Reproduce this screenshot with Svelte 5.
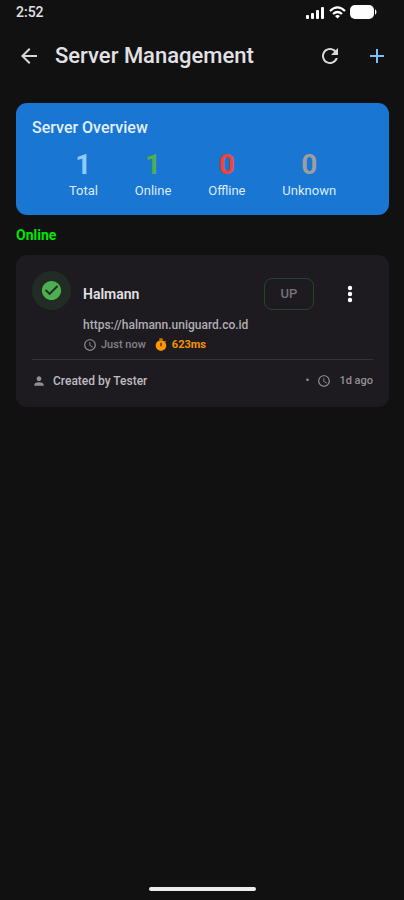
<script>
	const stats = [
		{ label: 'Total', value: 1, tone: 'total' },
		{ label: 'Online', value: 1, tone: 'online' },
		{ label: 'Offline', value: 0, tone: 'offline' },
		{ label: 'Unknown', value: 0, tone: 'unknown' }
	];

	const servers = [
		{
			name: 'Halmann',
			url: 'https://halmann.uniguard.co.id',
			status: 'UP',
			checked: 'Just now',
			latency: '623ms',
			author: 'Tester',
			age: '1d ago'
		}
	];
</script>

{#snippet clock()}
	<svg class="icon-clock" viewBox="0 0 24 24" aria-hidden="true">
		<path d="M11.99 2C6.47 2 2 6.48 2 12s4.47 10 9.99 10C17.52 22 22 17.52 22 12S17.52 2 11.99 2zM12 20c-4.42 0-8-3.58-8-8s3.58-8 8-8 8 3.58 8 8-3.58 8-8 8zm.5-13H11v6l5.25 3.15.75-1.23-4.5-2.67z" />
	</svg>
{/snippet}

<div class="screen">
	<div class="status-bar">
		<span class="time">2:52</span>
		<div class="indicators">
			<svg width="19" height="13" viewBox="0 0 19 13" aria-hidden="true">
				<rect x="0" y="9" width="3" height="4" rx="1" />
				<rect x="5" y="7" width="3" height="6" rx="1" />
				<rect x="10" y="4" width="3" height="9" rx="1" />
				<rect x="15" y="1" width="3" height="12" rx="1" />
			</svg>
			<svg width="17" height="13" viewBox="0 0 17 13" aria-hidden="true">
				<g fill="none" stroke="#fff" stroke-width="2.2">
					<path d="M1 5Q8.5-2.2 16 5" />
					<path d="M4 8Q8.5 4 13 8" />
				</g>
				<path d="M8.5 12.500L6 10Q8.5 8 11 10Z" />
			</svg>
			<svg width="28" height="14" viewBox="0 0 28 14" aria-hidden="true">
				<rect width="24" height="14" rx="5" />
				<path d="M25 4Q28 7 25 10Z" />
			</svg>
		</div>
	</div>

	<header class="app-bar">
		<button class="icon-button" aria-label="Back">
			<svg viewBox="0 0 24 24"><path d="M20 11H7.83l5.59-5.59L12 4l-8 8 8 8 1.41-1.41L7.83 13H20z" /></svg>
		</button>
		<h1>Server Management</h1>
		<button class="icon-button" aria-label="Refresh">
			<svg viewBox="0 0 24 24"><path d="M17.65 6.35C16.2 4.9 14.21 4 12 4c-4.42 0-7.99 3.58-7.99 8s3.57 8 7.99 8c3.73 0 6.84-2.55 7.73-6h-2.08c-.82 2.33-3.04 4-5.65 4-3.31 0-6-2.69-6-6s2.69-6 6-6c1.66 0 3.14.69 4.22 1.78L13 11h7V4z" /></svg>
		</button>
		<button class="icon-button add" aria-label="Add server">
			<svg viewBox="0 0 24 24"><path d="M19 13h-6v6h-2v-6H5v-2h6V5h2v6h6z" /></svg>
		</button>
	</header>

	<main>
		<section class="overview">
			<h2>Server Overview</h2>
			<div class="stats">
				{#each stats as stat}
					<div class="stat">
						<span class="value {stat.tone}">{stat.value}</span>
						<span class="label">{stat.label}</span>
					</div>
				{/each}
			</div>
		</section>

		<h3 class="group-title">Online</h3>

		{#each servers as server}
			<article class="server">
				<div class="server-main">
					<div class="avatar">
						<svg viewBox="0 0 24 24" aria-hidden="true"><path d="M12 2C6.48 2 2 6.48 2 12s4.48 10 10 10 10-4.48 10-10S17.52 2 12 2zm-2 15l-5-5 1.41-1.41L10 14.17l7.59-7.59L19 8z" /></svg>
					</div>
					<div class="details">
						<div class="name-row">
							<h4>{server.name}</h4>
							<span class="badge">{server.status}</span>
							<button class="icon-button more" aria-label="More options">
								<svg viewBox="0 0 24 24"><circle cx="12" cy="5.5" r="2.4" /><circle cx="12" cy="12" r="2.4" /><circle cx="12" cy="18.5" r="2.4" /></svg>
							</button>
						</div>
						<div class="url">{server.url}</div>
						<div class="checks">
							{@render clock()}
							<span class="checked">{server.checked}</span>
							<svg class="icon-timer" viewBox="0 0 24 24" aria-hidden="true"><path d="M9 1h6v2H9zm10.03 6.39l1.42-1.42c-.43-.51-.9-.99-1.41-1.41l-1.42 1.42C16.07 4.74 14.12 4 12 4c-4.97 0-9 4.03-9 9s4.02 9 9 9 9-4.03 9-9c0-2.12-.74-4.07-1.97-5.61zM13 14h-2V8h2z" /></svg>
							<span class="latency">{server.latency}</span>
						</div>
					</div>
				</div>
				<footer>
					<svg class="icon-person" viewBox="0 0 24 24" aria-hidden="true"><path d="M12 12c2.21 0 4-1.79 4-4s-1.79-4-4-4-4 1.79-4 4 1.79 4 4 4zm0 2c-2.67 0-8 1.34-8 4v2h16v-2c0-2.66-5.33-4-8-4z" /></svg>
					<span class="author">Created by {server.author}</span>
					<span class="dot">•</span>
					{@render clock()}
					<span class="age">{server.age}</span>
				</footer>
			</article>
		{/each}
	</main>

	<div class="home-indicator"></div>
</div>

<style>
	:global(body) {
		background: #111112;
	}

	.screen {
		display: flex;
		flex-direction: column;
		min-height: 100vh;
		font-family: Roboto, sans-serif;
		color: #e2e1e5;
		background: #111112;
	}

	h1,
	h2,
	h3,
	h4 {
		margin: 0;
		font-weight: 500;
	}

	svg {
		display: block;
		flex: none;
		fill: currentColor;
	}

	.status-bar {
		display: flex;
		align-items: center;
		justify-content: space-between;
		height: 24px;
		padding: 0 26px 0 16px;
	}

	.time {
		font-size: 14px;
		font-weight: 500;
	}

	.indicators {
		display: flex;
		align-items: center;
		gap: 4px;
		color: #fff;
	}

	.app-bar {
		display: flex;
		align-items: center;
		height: 64px;
		padding: 0 4px 0 5px;
	}

	.app-bar h1 {
		flex: 1;
		padding-left: 3px;
		font-size: 22px;
		line-height: 28px;
	}

	.icon-button {
		display: flex;
		align-items: center;
		justify-content: center;
		width: 47px;
		height: 48px;
		padding: 0;
		border: none;
		background: none;
		color: #d8d7da;
		cursor: pointer;
	}

	.icon-button svg {
		width: 24px;
		height: 24px;
	}

	.icon-button.add {
		color: #7cc0f5;
	}

	main {
		flex: 1;
		padding: 15px 15px 16px 16px;
	}

	.overview {
		padding: 16px;
		border-radius: 11px;
		background: #1976d2;
	}

	.overview h2 {
		font-size: 16px;
		line-height: 18px;
		color: #e3f0ff;
	}

	.stats {
		display: flex;
		justify-content: space-evenly;
		margin-top: 10px;
	}

	.stat {
		display: flex;
		flex-direction: column;
		align-items: center;
	}

	.value {
		font-size: 28px;
		font-weight: 700;
		line-height: 36px;
	}

	.value.total {
		color: #90caf9;
	}

	.value.online {
		color: #4caf50;
	}

	.value.offline {
		color: #f44336;
	}

	.value.unknown {
		color: #9e9e9e;
	}

	.label {
		font-size: 13px;
		line-height: 16px;
		color: #dcebfc;
	}

	.group-title {
		margin: 12px 0;
		font-size: 14px;
		font-weight: 700;
		line-height: 16px;
		color: #00e800;
	}

	.server {
		padding: 16px;
		border-radius: 11px;
		background: #1e1b20;
	}

	.server-main {
		display: flex;
		gap: 12px;
	}

	.avatar {
		display: flex;
		align-items: center;
		justify-content: center;
		flex: none;
		width: 39px;
		height: 39px;
		border-radius: 50%;
		background: #212c25;
		color: #4caf50;
	}

	.avatar svg {
		width: 23px;
		height: 23px;
	}

	.details {
		flex: 1;
		min-width: 0;
	}

	.name-row {
		display: flex;
		align-items: center;
		height: 46px;
	}

	.name-row h4 {
		flex: 1;
		font-size: 14px;
		font-weight: 600;
		line-height: 20px;
	}

	.badge {
		box-sizing: border-box;
		width: 50px;
		padding: 7px 0;
		border: 1px solid #24452b;
		border-radius: 8px;
		font-size: 13px;
		font-weight: 500;
		line-height: 16px;
		text-align: center;
		color: #757377;
	}

	.icon-button.more {
		margin-left: 12px;
		color: #fff;
	}

	.icon-button.more svg {
		width: 22px;
		height: 22px;
	}

	.url {
		font-size: 12px;
		font-weight: 500;
		line-height: 16px;
		color: #b0aeb3;
	}

	.checks {
		display: flex;
		align-items: center;
		margin-top: 4px;
		font-size: 11px;
		font-weight: 500;
		line-height: 16px;
	}

	.icon-clock {
		width: 14px;
		height: 14px;
		color: #929095;
	}

	.checked {
		margin-left: 4px;
		color: #858388;
	}

	.icon-timer {
		width: 14px;
		height: 14px;
		margin: 0 4px 0 8px;
		color: #ff9800;
	}

	.latency {
		font-weight: 700;
		color: #f59200;
	}

	footer {
		display: flex;
		align-items: center;
		margin-top: 6px;
		padding: 12px 0 1px;
		border-top: 1px solid #353238;
		font-size: 11px;
		font-weight: 500;
		line-height: 18px;
		color: #929095;
	}

	.icon-person {
		width: 14px;
		height: 14px;
	}

	.author {
		flex: 1;
		margin-left: 7px;
		font-size: 12px;
		color: #bebcc1;
	}

	.dot {
		margin-right: 8px;
	}

	.age {
		margin-left: 8px;
	}

	.home-indicator {
		width: 107px;
		height: 4px;
		margin: 0 auto 9px;
		border-radius: 2px;
		background: #ededed;
	}
</style>
